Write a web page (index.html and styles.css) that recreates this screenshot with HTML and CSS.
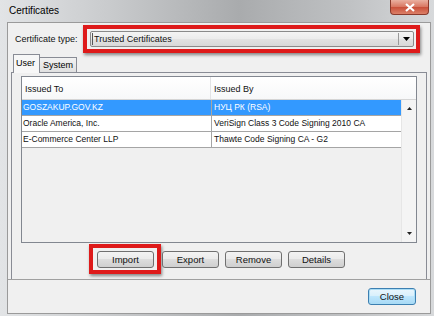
FILE: index.html
```html
<!DOCTYPE html>
<html>
<head>
    <meta charset="utf-8">
    <title>Certificates</title>
    <link rel="stylesheet" href="styles.css">
</head>
<body>
    <div id="window">
        <div class="titlebar">
            <span class="title">Certificates</span>
            <div class="close-x">
                <svg width="12" height="9" viewBox="0 0 12 9"><path d="M2 1 L10 8 M10 1 L2 8" stroke="#fff" stroke-width="2.2" fill="none"/></svg>
            </div>
        </div>
        <div class="client">
            <div class="type-row">
                <span class="label">Certificate type:</span>
                <div class="mark combo-mark">
                    <div class="combo">
                        <span class="combo-text">Trusted Certificates</span>
                        <span class="combo-btn"><svg width="7" height="4" viewBox="0 0 7 4"><path d="M0 0 H7 L3.5 4 Z" fill="#000"/></svg></span>
                    </div>
                </div>
            </div>
            <div class="tabs">
                <div class="tab active">User</div>
                <div class="tab">System</div>
            </div>
            <div class="panel">
                <div class="list">
                    <div class="list-head">
                        <div class="hcell c1">Issued To</div>
                        <div class="hcell c2">Issued By</div>
                        <div class="hcell c3"></div>
                    </div>
                    <div class="list-body">
                        <div class="rows">
                            <div class="row selected"><span class="cell c1">GOSZAKUP.GOV.KZ</span><span class="cell c2">НУЦ РК (RSA)</span></div>
                            <div class="row"><span class="cell c1">Oracle America, Inc.</span><span class="cell c2">VeriSign Class 3 Code Signing 2010 CA</span></div>
                            <div class="row"><span class="cell c1">E-Commerce Center LLP</span><span class="cell c2">Thawte Code Signing CA - G2</span></div>
                        </div>
                        <div class="scrollbar">
                            <svg width="5" height="3" viewBox="0 0 5 3"><path d="M0 3 L2.5 0 L5 3 Z" fill="#222"/></svg>
                            <svg width="5" height="3" viewBox="0 0 5 3"><path d="M0 0 H5 L2.5 3 Z" fill="#222"/></svg>
                        </div>
                    </div>
                </div>
                <div class="actions">
                    <div class="mark import-mark"><button class="btn">Import</button></div>
                    <button class="btn export">Export</button>
                    <button class="btn">Remove</button>
                    <button class="btn">Details</button>
                </div>
            </div>
            <div class="footer">
                <button class="btn default">Close</button>
            </div>
        </div>
    </div>
</body>
</html>
```

FILE: styles.css
```css
html, body { margin:0; padding:0; }
body { width:434px; height:316px; overflow:hidden; font-family:"Liberation Sans", Arial, sans-serif; font-size:9px; color:#111;
    background:linear-gradient(90deg, #e2e4e6 0%, #c9cbcd 25%, #a9abad 55%, #bfc1c3 80%, #d7d9db 100%); }
#window { width:434px; height:316px; display:flex; flex-direction:column; }

.titlebar { height:22px; display:flex; align-items:flex-start; flex-shrink:0; }
.title { font-size:10px; margin:5px 0 0 9px; color:#000; }
.close-x { margin-left:auto; margin-right:5px; width:37px; height:14px; border:1px solid #8a3a2c; border-top:none; border-radius:0 0 4px 4px;
    background:linear-gradient(#eab0a0, #d87560 50%, #c9503a 52%, #dc8068); display:flex; align-items:center; justify-content:center; }

.client { margin:0 3px 2px 7px; flex:1; background:#f0f0f0; border:1px solid #9a9a9a; display:flex; flex-direction:column; }

.type-row { display:flex; align-items:center; padding:2px 10px 0 7px; }
.label { width:68px; }
.mark { border:4px solid #de1a1a; box-shadow:1px 2px 3px rgba(0,0,0,.45); }
.combo-mark { flex:1; padding:2px 2px 2px 3px; }
.combo { height:14px; border:1px solid #8a8a8a; border-radius:2px; display:flex; align-items:stretch;
    background:linear-gradient(#f4f4f4, #ececec 48%, #e2e2e2 52%, #d8d8d8); }
.combo-text { flex:1; margin:1px 0 1px 1px; border-left:1px solid #555; border-right:1px solid #999; padding-left:1px; line-height:12px; }
.combo-btn { width:14px; display:flex; align-items:center; justify-content:center; }

.tabs { display:flex; align-items:flex-end; margin:1px 3px 0 3px; padding-left:2px; border-bottom:1px solid #898c95; }
.tab { height:14px; line-height:14px; padding:0 3px; border:1px solid #898c95; border-bottom:none;
    background:linear-gradient(#f2f2f2, #e0e0e0); color:#000; }
.tab.active { height:18px; line-height:17px; padding:0 4px 0 2px; background:#f7f7f7; margin-bottom:-1px; margin-right:-1px; }

.panel { margin:0 3px; padding:3px 9px 5px 9px; border-left:1px solid #898c95; border-right:1px solid #898c95; flex:1; }

.list { height:165px; border:1px solid #828790; display:flex; flex-direction:column; background:#f0f0f0; }
.list-head { height:22px; display:flex; background:linear-gradient(#ffffff, #f7f8f9); border-bottom:1px solid #d5d5d5; flex-shrink:0; }
.hcell { line-height:24px; }
.hcell.c1 { width:185px; padding-left:3px; border-right:1px solid #e2e3e5; }
.hcell.c2 { width:186px; padding-left:3px; }
.hcell.c3 { flex:1; }
.list-body { flex:1; display:flex; }
.rows { width:379px; font-size:8.5px; }
.row { display:flex; height:15px; line-height:15px; background:#fff; border-bottom:1px solid #a5a5a5; }
.row.selected { background:#3399ff; color:#fff; }
.cell.c1 { width:188px; padding-left:1px; border-right:1px solid #a5a5a5; white-space:nowrap; }
.cell.c2 { flex:1; padding-left:2px; white-space:nowrap; }
.scrollbar { flex:1; background:#f4f4f4; border-left:1px solid #e6e6e6; display:flex; flex-direction:column; align-items:center;
    justify-content:space-between; padding:7px 0 7px; }

.actions { display:flex; align-items:center; margin:1px 0 0 68px; }
.import-mark { padding:3px 3px 2px 4px; margin-right:1px; }
.btn { width:57px; height:17px; padding:0; border:1px solid #707070; border-radius:3px; font-family:"Liberation Sans", Arial, sans-serif; font-size:9.5px; color:#111;
    background:linear-gradient(#f3f3f3, #ebebeb 45%, #dddddd 50%, #cfcfcf); }
.actions .btn + .btn { margin-left:6px; }
.actions .export { margin-left:0; }

.footer { border-top:1px solid #a0a0a0; display:flex; justify-content:flex-end; padding:8px 14px 0 0; height:25px; }
.btn.default { width:48px; border-color:#3c7fb1; box-shadow:inset 0 0 0 1px #a9dcf5;
    background:linear-gradient(#eaf6fd, #d9f0fc 45%, #bee6fd 50%, #a7d9f5); }
```
